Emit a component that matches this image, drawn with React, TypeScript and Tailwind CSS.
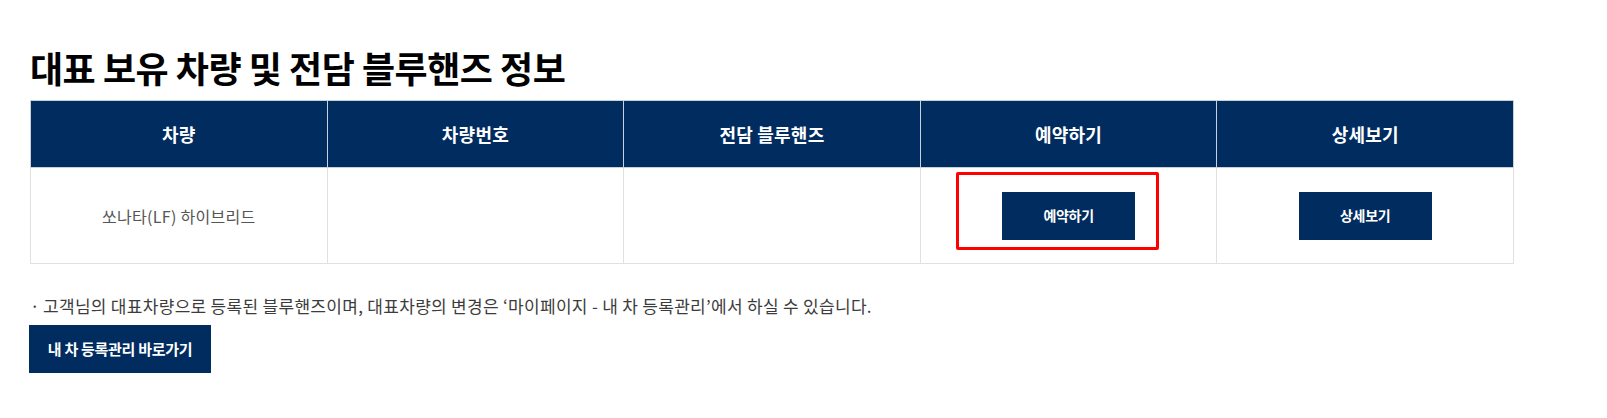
import React from 'react';

const font = "font-['Noto_Sans_CJK_KR','Noto_Sans',sans-serif]";

const columns = ['차량', '차량번호', '전담 블루핸즈', '예약하기', '상세보기'];

const NavyButton: React.FC<{ label: string; className?: string }> = ({ label, className = '' }) => (
  <button className={`h-12 bg-[#002c5f] text-white font-bold ${className}`}>
    {label}
  </button>
);

const App: React.FC = () => {
  return (
    <div className={`w-[1607px] h-[418px] bg-white ${font}`}>
      <div className="ml-[30px] w-[1484px] pt-[42px]">
        <h2 className="text-[36px] leading-[50px] font-bold text-black tracking-[-0.5px] mb-[8px]">
          대표 보유 차량 및 전담 블루핸즈 정보
        </h2>

        <table className="w-full table-fixed border-collapse">
          <thead>
            <tr className="h-[67px] bg-[#002c5f]">
              {columns.map((c) => (
                <th
                  key={c}
                  className="border border-[#c8d0da] text-white text-[18px] font-bold tracking-[0.2px]"
                >
                  {c}
                </th>
              ))}
            </tr>
          </thead>
          <tbody>
            <tr className="h-[96px]">
              <td className="border border-[#e4e0d9] text-center text-[16px] tracking-[0.3px] text-[#555]">
                쏘나타(LF) 하이브리드
              </td>
              <td className="border border-[#e4e0d9]" />
              <td className="border border-[#e4e0d9]" />
              <td className="border border-[#e4e0d9] text-center">
                <div className="relative inline-block">
                  <NavyButton label="예약하기" className="w-[133px] text-[14px] tracking-[-0.3px]" />
                  <span className="absolute -left-[46px] -top-[20px] w-[203px] h-[78px] border-[3px] border-[#ff0000] rounded-[2px] pointer-events-none" />
                </div>
              </td>
              <td className="border border-[#e4e0d9] text-center">
                <NavyButton label="상세보기" className="w-[133px] text-[14px] tracking-[-0.3px]" />
              </td>
            </tr>
          </tbody>
        </table>

        <p className="mt-[31px] text-[17px] leading-[22px] tracking-[0.3px] text-[#3c3c3c] flex">
          <span className="w-[13px] shrink-0">·</span>
          고객님의 대표차량으로 등록된 블루핸즈이며, 대표차량의 변경은 ‘마이페이지 - 내 차 등록관리’에서 하실 수 있습니다.
        </p>

        <NavyButton label="내 차 등록관리 바로가기" className="mt-[8px] w-[182px] -ml-[1px] text-[15px] tracking-[-0.3px]" />
      </div>
    </div>
  );
};

export default App;
